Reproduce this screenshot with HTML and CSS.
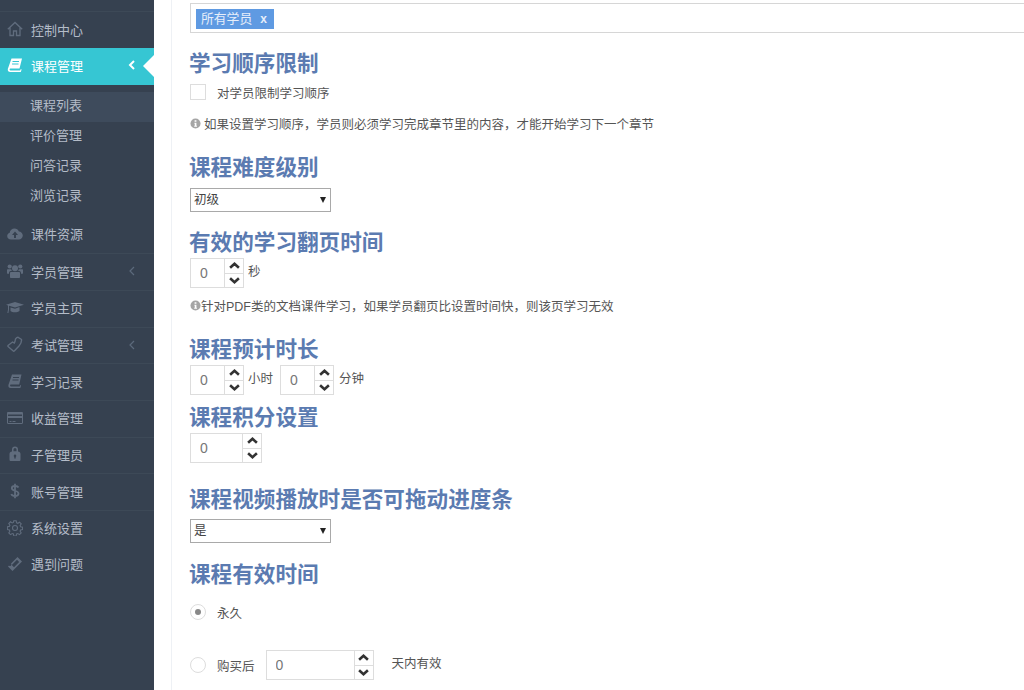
FILE: index.html
```html
<!DOCTYPE html>
<html lang="zh-CN">
<head>
    <meta charset="UTF-8">
    <title>课程设置</title>
    <link rel="stylesheet" href="styles.css">
</head>
<body>
    <aside class="sidebar">
        <ul class="nav">
            <li class="nav-item">
                <svg class="nav-icon" viewBox="0 0 16 16"><path d="M.8 8.300 8 1.500l7.200 6.800M3 6.500V14.500h3.500V10h3v4.500H13V6.500" fill="none" stroke="currentColor" stroke-width="1.300"/></svg>
                <span>控制中心</span>
            </li>
            <li class="nav-item active">
                <svg class="nav-icon" viewBox="0 0 16 16"><path d="M4.500 1.500h10.500l-2.500 10H3.800c-.8 0-1.300.5-1.200 1.100s.6 1 1.300 1h9.300l.6-1.600.8.500-.8 2.500H3.200c-1.600 0-2.700-1.200-2.400-3z" fill="currentColor"/><path d="M5.500 4.500h6.500M5 7h6.500" stroke="#36c6d3" stroke-width="1"/></svg>
                <span>课程管理</span>
                <svg class="nav-arrow" viewBox="0 0 8 12"><path d="M6 2 2 6l4 4" fill="none" stroke="currentColor" stroke-width="2"/></svg>
            </li>
            <li>
                <ul class="subnav">
                    <li class="sub-item current">课程列表</li>
                    <li class="sub-item">评价管理</li>
                    <li class="sub-item">问答记录</li>
                    <li class="sub-item">浏览记录</li>
                </ul>
            </li>
            <li class="nav-item no-line">
                <svg class="nav-icon" viewBox="0 0 16 16"><path fill-rule="evenodd" d="M4 13.500C1.800 13.500.2 12 .2 10c0-1.600 1-2.900 2.500-3.300C3 4.300 5 2.500 7.500 2.500c2 0 3.700 1.200 4.400 3 2 .1 3.900 1.800 3.900 4 0 2.300-1.800 4-4 4zM8 5.500 5 9h2v3h2V9h2z" fill="currentColor"/></svg>
                <span>课件资源</span>
            </li>
            <li class="nav-item">
                <svg class="nav-icon" viewBox="0 0 16 16"><g fill="currentColor"><circle cx="8" cy="5.200" r="3"/><circle cx="2.700" cy="3.500" r="2.100"/><circle cx="13.300" cy="3.500" r="2.100"/><path d="M4 9h8c.5 0 1 .5 1 1v4c0 .6-.5 1-1 1H4c-.5 0-1-.4-1-1v-4c0-.5.5-1 1-1zM.5 6.300h3.700c.2 1 .5 1.500 1 1.800H3.500C2.800 8.100 2 9 2 10v.8H.5c-.3 0-.5-.3-.5-.5V7c0-.4.2-.7.5-.7zM11.800 6.300h3.700c.3 0 .5.300.5.700v3.300c0 .2-.2.500-.5.500H14V10c0-1-.8-1.900-1.500-1.900h-1.700c.5-.3.8-.8 1-1.800z"/></g></svg>
                <span>学员管理</span>
                <svg class="nav-arrow" viewBox="0 0 8 12"><path d="M6 2 2 6l4 4" fill="none" stroke="currentColor" stroke-width="1.200"/></svg>
            </li>
            <li class="nav-item">
                <svg class="nav-icon wide" viewBox="0 0 18 14"><path d="M9 1 18 3.800 9 6.600 3 4.800v3.700L2.400 12h-1L2 8.500V4.500L0 3.800z" fill="currentColor"/><path d="M4.500 6.500v3.500c1.500 1.800 7 1.800 9 0V6L9 7.700z" fill="currentColor"/></svg>
                <span>学员主页</span>
            </li>
            <li class="nav-item">
                <svg class="nav-icon" viewBox="0 0 16 16"><path d="M1 9.500 5.500 6l1.800 1c.5-.7 1-2.500 1.200-4 .8-1 1.500-1.800 2.500-1.700 1.200 1 2.500 1.200 3.500 2.200.3 2.500-.8 4.500-2.500 6.500l-4.500 4.800c-.5.500-1 .5-1.500 0L1 10.500z" fill="none" stroke="currentColor" stroke-width="1.400"/></svg>
                <span>考试管理</span>
                <svg class="nav-arrow" viewBox="0 0 8 12"><path d="M6 2 2 6l4 4" fill="none" stroke="currentColor" stroke-width="1.200"/></svg>
            </li>
            <li class="nav-item">
                <svg class="nav-icon" viewBox="0 0 16 16"><path d="M5 1.500h9.500l-2.300 10H4.200c-.8 0-1.200.5-1.100 1.100s.6 1 1.200 1h8.400l.6-1.600.8.500-.8 2.500H3.500c-1.500 0-2.400-1.200-2.100-3z" fill="currentColor"/><path d="M6 4.500h6M5.500 7h6" stroke="#364150" stroke-width="1"/></svg>
                <span>学习记录</span>
            </li>
            <li class="nav-item">
                <svg class="nav-icon" viewBox="0 0 16 16"><path fill-rule="evenodd" d="M1.200 2h13.600c.7 0 1.200.5 1.200 1.200v9.600c0 .7-.5 1.200-1.200 1.200H1.200C.5 14 0 13.500 0 12.800V3.200C0 2.500.5 2 1.200 2zM1 4.500v1.500h14V4.500zM1 8v4.800c0 .1.100.2.200.2h13.600c.1 0 .2-.1.200-.2V8zM2.500 11h2v1h-2zm3 0h3v1h-3z" fill="currentColor"/></svg>
                <span>收益管理</span>
            </li>
            <li class="nav-item">
                <svg class="nav-icon" viewBox="0 0 16 16"><path fill-rule="evenodd" d="M5 5.500V3.500a3 3 0 0 1 6 0v2c1.500.3 2.500 1.200 2.500 2.500v5.500c0 1-.5 1.500-1.500 1.500H4c-1 0-1.500-.5-1.500-1.500V8c0-1.300 1-2.200 2.500-2.500zm1.500-.2h3V3.500a1.500 1.500 0 0 0-3 0zM8 8.500a1.300 1.300 0 0 0-.7 2.400V12.500h1.400v-1.600A1.300 1.300 0 0 0 8 8.500z" fill="currentColor"/></svg>
                <span>子管理员</span>
            </li>
            <li class="nav-item">
                <svg class="nav-icon" viewBox="0 0 16 16"><path d="M11.500 4.500C11 3.500 9.500 3 8 3 6 3 4.800 4 4.800 5.300 4.800 8.500 11.500 7 11.500 10.500c0 1.500-1.500 2.500-3.500 2.500-1.700 0-3.200-.7-3.700-2M8 .8v14.400" fill="none" stroke="currentColor" stroke-width="1.800"/></svg>
                <span>账号管理</span>
            </li>
            <li class="nav-item">
                <svg class="nav-icon" viewBox="0 0 16 16"><circle cx="8" cy="8" r="2.500" fill="none" stroke="currentColor" stroke-width="1.100"/><path d="M6.800.8h2.400l.4 2 1.200.5 1.700-1.100 1.700 1.700-1.100 1.700.5 1.200 2 .4v2.400l-2 .4-.5 1.200 1.100 1.700-1.700 1.700-1.700-1.100-1.200.5-.4 2H6.800l-.4-2-1.200-.5-1.700 1.100-1.700-1.700 1.100-1.700-.5-1.200-2-.4V6.800l2-.4.5-1.200-1.100-1.700 1.700-1.700 1.700 1.100 1.200-.5z" fill="none" stroke="currentColor" stroke-width="1.100"/></svg>
                <span>系统设置</span>
            </li>
            <li class="nav-item no-line">
                <svg class="nav-icon" viewBox="0 0 16 16"><path fill-rule="evenodd" d="M10.500 1 15 5.500 5.500 15 1 10.500l1-1a1.400 1.400 0 0 0 2-2zM10 3.800 4.800 9l2.200 2.200L12.200 6z" fill="currentColor"/></svg>
                <span>遇到问题</span>
            </li>
        </ul>
    </aside>

    <main class="content">
        <div class="tag-box">
            <span class="tag">所有学员<b>x</b></span>
        </div>

        <section class="group gap-15">
            <h2>学习顺序限制</h2>
            <label class="check-row"><span class="checkbox"></span>对学员限制学习顺序</label>
            <p class="hint">
                <svg class="info" viewBox="0 0 12 12"><circle cx="6" cy="6" r="5.500" fill="#a5a5a5"/><path d="M5 2.500h2v1.700H5zM4.800 5.200h2.200v3.300h.6v1H4.600v-1h.6V6.200h-.4z" fill="#fff"/></svg>
                如果设置学习顺序，学员则必须学习完成章节里的内容，才能开始学习下一个章节
            </p>
        </section>

        <section class="group gap-20">
            <h2>课程难度级别</h2>
            <div class="picker-wrap">
                <select class="picker"><option>初级</option></select>
            </div>
        </section>

        <section class="group gap-15">
            <h2>有效的学习翻页时间</h2>
            <div class="spin-row">
                <div class="spinner">
                    <input type="text" value="0">
                    <div class="spin-btns"><span><svg viewBox="0 0 10 6"><path d="M1 5 5 1.500 9 5" /></svg></span><span><svg viewBox="0 0 10 6"><path d="M1 1 5 4.500 9 1" /></svg></span></div>
                </div>
                <span class="unit">秒</span>
            </div>
            <p class="hint tight">
                <svg class="info flush" viewBox="0 0 12 12"><circle cx="6" cy="6" r="5.500" fill="#a5a5a5"/><path d="M5 2.500h2v1.700H5zM4.800 5.200h2.200v3.300h.6v1H4.600v-1h.6V6.200h-.4z" fill="#fff"/></svg>针对PDF类的文档课件学习，如果学员翻页比设置时间快，则该页学习无效
            </p>
        </section>

        <section class="group gap-20">
            <h2>课程预计时长</h2>
            <div class="spin-row">
                <div class="spinner">
                    <input type="text" value="0">
                    <div class="spin-btns"><span><svg viewBox="0 0 10 6"><path d="M1 5 5 1.500 9 5" /></svg></span><span><svg viewBox="0 0 10 6"><path d="M1 1 5 4.500 9 1" /></svg></span></div>
                </div>
                <span class="unit">小时</span>
                <div class="spinner second">
                    <input type="text" value="0">
                    <div class="spin-btns"><span><svg viewBox="0 0 10 6"><path d="M1 5 5 1.500 9 5" /></svg></span><span><svg viewBox="0 0 10 6"><path d="M1 1 5 4.500 9 1" /></svg></span></div>
                </div>
                <span class="unit wider">分钟</span>
            </div>
        </section>

        <section class="group gap-7">
            <h2>课程积分设置</h2>
            <div class="spin-row">
                <div class="spinner medium">
                    <input type="text" value="0">
                    <div class="spin-btns"><span><svg viewBox="0 0 10 6"><path d="M1 5 5 1.500 9 5" /></svg></span><span><svg viewBox="0 0 10 6"><path d="M1 1 5 4.500 9 1" /></svg></span></div>
                </div>
            </div>
        </section>

        <section class="group gap-21">
            <h2>课程视频播放时是否可拖动进度条</h2>
            <div class="picker-wrap lower">
                <select class="picker"><option>是</option></select>
            </div>
        </section>

        <section class="group gap-16">
            <h2>课程有效时间</h2>
            <div class="radio-row first">
                <span class="radio on"></span>
                <span class="radio-label">永久</span>
            </div>
            <div class="radio-row second">
                <span class="radio"></span>
                <span class="radio-label">购买后</span>
                <div class="spinner large">
                    <input type="text" value="0">
                    <div class="spin-btns"><span><svg viewBox="0 0 10 6"><path d="M1 5 5 1.500 9 5" /></svg></span><span><svg viewBox="0 0 10 6"><path d="M1 1 5 4.500 9 1" /></svg></span></div>
                </div>
                <span class="unit far">天内有效</span>
            </div>
        </section>
    </main>
</body>
</html>
```

FILE: styles.css
```css
* {
    box-sizing: border-box;
}

html, body {
    height: 100%;
}

body {
    margin: 0;
    display: flex;
    overflow: hidden;
    background: #ffffff;
    color: #555555;
    font-family: "Liberation Sans", "Noto Sans CJK SC", sans-serif;
    font-size: 12.5px;
}

ul {
    list-style: none;
    margin: 0;
    padding: 0;
}

/* sidebar */
.sidebar {
    width: 154px;
    flex: none;
    background: #364150;
    padding-top: 11.3px;
}

.nav-item {
    position: relative;
    display: flex;
    align-items: center;
    height: 36.67px;
    padding: 0 0 2px 7px;
    border-top: 1px solid #3d4957;
    color: #b4bcc8;
    font-size: 13px;
}

.nav-item.no-line {
    border-top: none;
}

.nav-icon {
    width: 16px;
    height: 16px;
    margin-right: 8px;
    color: #606c7d;
}

.nav-icon.wide {
    width: 18px;
    margin-left: -1px;
    margin-right: 7px;
}

.nav-arrow {
    position: absolute;
    left: 128px;
    top: 11px;
    width: 8px;
    height: 12px;
    color: #5c6a7c;
}

.nav-item.active {
    background: #36c6d3;
    border-top: none;
    color: #ffffff;
}

.nav-item.active .nav-icon,
.nav-item.active .nav-arrow {
    color: #ffffff;
}

.nav-item.active::after {
    content: "";
    position: absolute;
    right: 0;
    top: 7px;
    border-style: solid;
    border-width: 11px 11px 11px 0;
    border-color: transparent #ffffff transparent transparent;
}

.subnav {
    padding: 7px 0 5px;
}

.sub-item {
    height: 30px;
    line-height: 28px;
    padding-left: 30px;
    color: #b4bcc8;
    font-size: 13px;
}

.sub-item.current {
    background: #3e4b5c;
}

/* form column */
.content {
    flex: 1;
    min-width: 0;
    margin-left: 17px;
    padding: 3px 0 0 18px;
    border-left: 1px solid #eef1f5;
}

.tag-box {
    height: 30px;
    padding: 5px 5px;
    border: 1px solid #d6d6d6;
    border-right: none;
}

.tag {
    display: inline-block;
    height: 20px;
    line-height: 19px;
    padding: 0 7px 0 5px;
    background: #5f9ae2;
    color: #e6eefa;
    font-size: 12.8px;
}

.tag b {
    margin-left: 8px;
    font-size: 12px;
}

.group h2 {
    margin: 0 0 0 -1px;
    height: 30px;
    line-height: 32px;
    color: #5b7bb1;
    font-size: 21.6px;
    font-weight: bold;
}

.gap-7 { margin-top: 7px; }
.gap-15 { margin-top: 15px; }
.gap-16 { margin-top: 16px; }
.gap-20 { margin-top: 20px; }
.gap-21 { margin-top: 21px; }

.check-row {
    display: flex;
    align-items: center;
    height: 16px;
    margin-top: 6px;
}

.checkbox {
    width: 16px;
    height: 16px;
    margin-right: 11px;
    border: 1px solid #dddddd;
}

.hint {
    display: flex;
    align-items: center;
    height: 18px;
    margin: 14px 0 0;
}

.hint.tight {
    margin-top: 8px;
}

.info {
    width: 11px;
    height: 11px;
    margin-right: 3px;
}

.info.flush {
    margin-right: 0;
}

.picker-wrap {
    position: relative;
    width: 141px;
    margin-top: 6px;
}

.picker-wrap.lower {
    margin-top: 5px;
}

/* small black triangle instead of the default select arrow */
.picker-wrap::after {
    content: "";
    position: absolute;
    right: 5px;
    top: 9px;
    border-style: solid;
    border-width: 6px 3px 0;
    border-color: #222222 transparent transparent;
}

.picker {
    display: block;
    width: 100%;
    height: 24px;
    padding: 0 0 0 3px;
    appearance: none;
    background: #ffffff;
    border: 1px solid #a9a9a9;
    color: #444444;
    font-family: inherit;
    font-size: 12.5px;
}

.spin-row {
    display: flex;
    align-items: flex-start;
    margin-top: 1px;
}

.spinner {
    display: flex;
    width: 54px;
    height: 30px;
    border: 1px solid #dddddd;
}

.spinner.second {
    margin-left: 7px;
}

.spinner.medium {
    width: 72px;
}

.spinner.large {
    width: 108px;
    margin-left: 11px;
}

.spinner input {
    flex: 1;
    min-width: 0;
    height: 100%;
    padding: 0 0 0 9px;
    border: none;
    color: #777777;
    font-family: inherit;
    font-size: 14px;
}

.spin-btns {
    display: flex;
    flex-direction: column;
    flex: none;
    width: 19px;
    border-left: 1px solid #dddddd;
}

.spin-btns span {
    display: flex;
    flex: 1;
    align-items: center;
    justify-content: center;
}

.spin-btns span + span {
    border-top: 1px solid #dddddd;
}

.spin-btns svg {
    width: 11px;
    height: 7px;
    fill: none;
    stroke: #333333;
    stroke-width: 2.400;
}

.unit {
    height: 30px;
    line-height: 29px;
    margin-left: 4px;
}

.unit.wider {
    margin-left: 5px;
}

.unit.far {
    margin-left: 18px;
}

.radio-row {
    display: flex;
    align-items: center;
    height: 30px;
}

.radio-row.first {
    margin-top: 8px;
}

.radio-row.second {
    margin-top: 23px;
}

.radio {
    position: relative;
    width: 16px;
    height: 16px;
    margin-right: 11px;
    border: 1px solid #dddddd;
    border-radius: 50%;
}

.radio.on::after {
    content: "";
    position: absolute;
    left: 4px;
    top: 4px;
    width: 6px;
    height: 6px;
    border-radius: 50%;
    background: #888888;
}

.radio-label {
    white-space: nowrap;
}
```
